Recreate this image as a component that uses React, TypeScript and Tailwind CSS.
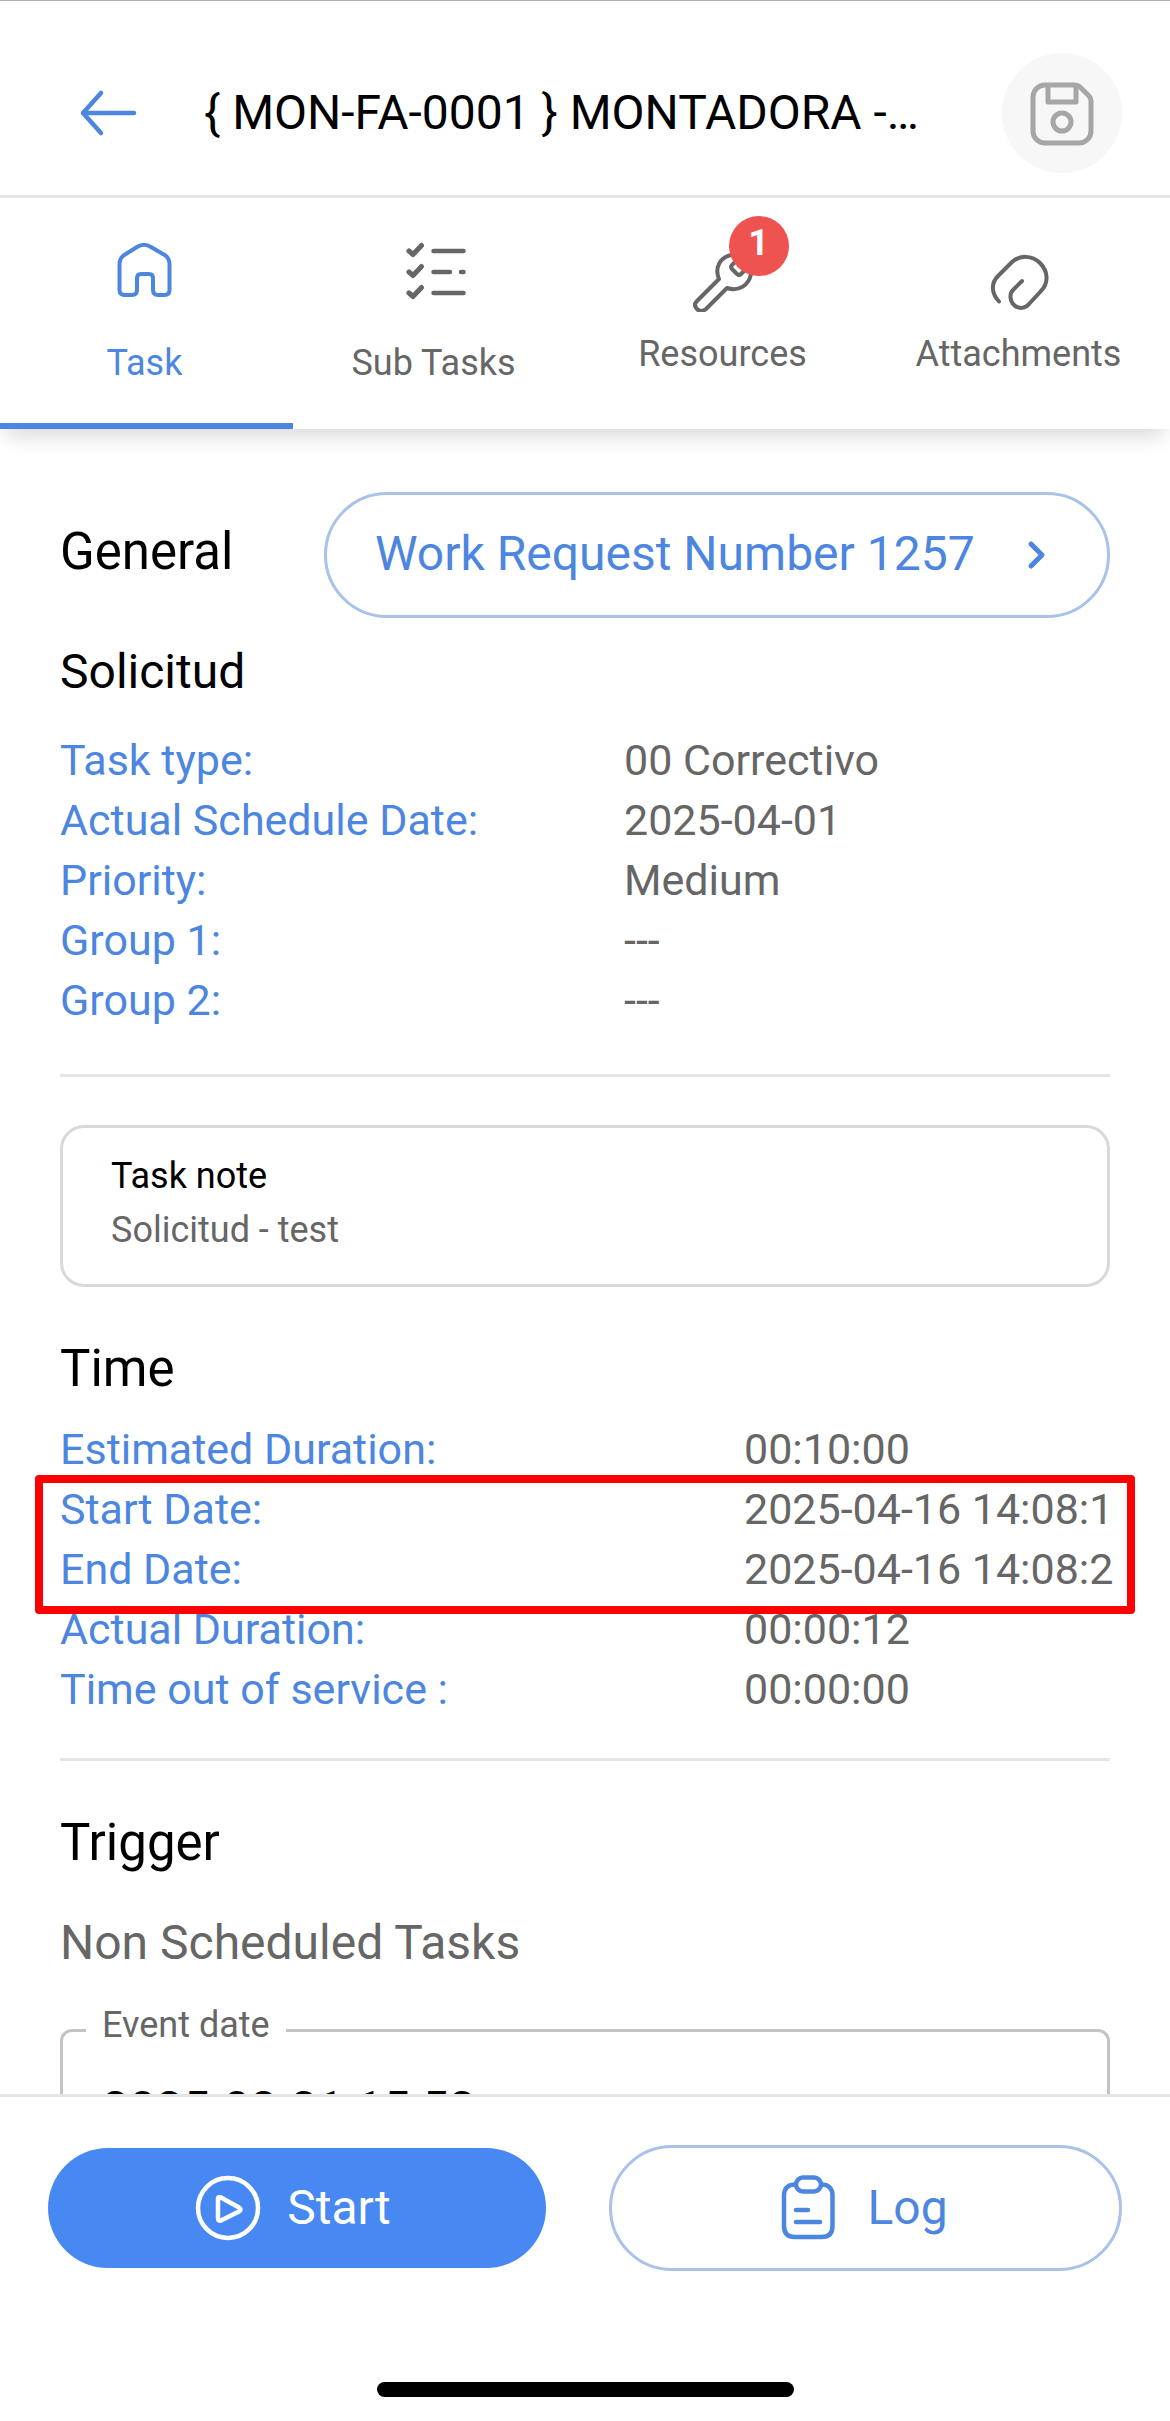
import { useState } from "react";
import type { ReactNode } from "react";

interface InfoRow {
  label: string;
  value: string;
}

interface TabItem {
  id: string;
  label: string;
  icon: ReactNode;
  badge?: number;
  compact?: boolean;
}

const generalRows: InfoRow[] = [
  { label: "Task type:", value: "00 Correctivo" },
  { label: "Actual Schedule Date:", value: "2025-04-01" },
  { label: "Priority:", value: "Medium" },
  { label: "Group 1:", value: "---" },
  { label: "Group 2:", value: "---" },
];

const dateRows: InfoRow[] = [
  { label: "Start Date:", value: "2025-04-16 14:08:1" },
  { label: "End Date:", value: "2025-04-16 14:08:2" },
];

const durationRows: InfoRow[] = [
  { label: "Actual Duration:", value: "00:00:12" },
  { label: "Time out of service :", value: "00:00:00" },
];

const strokeProps = {
  fill: "none",
  stroke: "currentColor",
  strokeWidth: 4,
  strokeLinecap: "round",
  strokeLinejoin: "round",
} as const;

function BackIcon() {
  return (
    <svg className="size-[60px]" viewBox="0 0 60 60" {...strokeProps} strokeWidth={4.5}>
      <path d="M56 30H5M23 10L5 30l18 20" />
    </svg>
  );
}

function SaveIcon() {
  return (
    <svg className="size-[66px]" viewBox="0 0 66 66" {...strokeProps} strokeWidth={5}>
      <path d="M16 5h30q3 0 5 2l9 9q2 2 2 5v30a12 12 0 0 1-12 12H16A12 12 0 0 1 4 51V17A12 12 0 0 1 16 5z" />
      <path d="M19 6v16h28V6" />
      <circle cx="33" cy="42" r="9" />
    </svg>
  );
}

function HomeIcon() {
  return (
    <svg className="size-[60px]" viewBox="0 0 60 60" {...strokeProps}>
      <path d="M4.5 24c0-4 1-6 4-8.500L22 7q7-4.500 14 0l14.500 8.500c3 2.500 4 4.500 4 8.500v26q0 5-5 5H43q-5 0-5-5V38q0-4-4-4h-8q-4 0-4 4v12q0 5-5 5H9.500q-5 0-5-5z" />
    </svg>
  );
}

function ChecklistIcon() {
  return (
    <svg className="size-[60px] overflow-visible" viewBox="0 0 60 60" {...strokeProps} strokeWidth={4.5}>
      <path d="M5 11l4 3.500 8.500-9M5 32l4 3.500 8.500-9M5 53l4 3.500 8.500-9" strokeWidth={5} />
      <path d="M29.500 11h30M29.500 32H46M57 32h2.500M29.500 53h30" />
    </svg>
  );
}

function WrenchIcon() {
  return (
    <svg className="size-[60px]" viewBox="0 0 60 60" {...strokeProps}>
      <path d="M38 3c-10 2-17 12-12 24L4 49q-4 4 0 8t9 0l21-21c12 4 22-3 24-14" />
      <path d="M46 6l-7 7q-2 2 0 4l5 5q2 2 4 0l7-7" />
    </svg>
  );
}

function ClipIcon() {
  return (
    <svg className="size-[60px] overflow-visible" viewBox="0 0 60 60" {...strokeProps}>
      <path d="M10 49.500C2 41 2 31 9 24L23 10c8-7 20-7 28 1s9 20 1 28L40 52c-4 5-11 5-15 1s-5-11-1-15l9-9" />
    </svg>
  );
}

function PlayIcon() {
  return (
    <svg className="size-[66px]" viewBox="0 0 66 66" {...strokeProps} strokeWidth={4.5}>
      <circle cx="33" cy="33" r="30" />
      <path d="M23 23.500v20q0 3 3 2l18-9q3-2 0-4l-18-10q-3-1-3 1z" />
    </svg>
  );
}

function ClipboardIcon() {
  return (
    <svg className="size-[66px]" viewBox="0 0 66 66" {...strokeProps} strokeWidth={4.5}>
      <path d="M20 9.500c-8 0-11 5-11 11V51q0 11 11 11h26.500q11 0 11-11V20.500c0-6-3-11-11-11" />
      <rect x="21" y="2.500" width="25" height="14" rx="7" />
      <path d="M21 35h12M21 47h24" />
    </svg>
  );
}

const tabs: TabItem[] = [
  { id: "task", label: "Task", icon: <HomeIcon /> },
  { id: "subtasks", label: "Sub Tasks", icon: <ChecklistIcon /> },
  { id: "resources", label: "Resources", icon: <WrenchIcon />, badge: 1, compact: true },
  { id: "attachments", label: "Attachments", icon: <ClipIcon />, compact: true },
];

function InfoList({ rows, wide = false }: { rows: InfoRow[]; wide?: boolean }) {
  return (
    <dl className="text-[43px] leading-[60px]">
      {rows.map((row) => (
        <div key={row.label} className="flex">
          <dt className={`shrink-0 text-[#4c86e0] ${wide ? "w-[684px]" : "w-[564px]"}`}>
            {row.label}
          </dt>
          <dd className="flex-1 whitespace-nowrap text-[#666]">{row.value}</dd>
        </div>
      ))}
    </dl>
  );
}

export default function App() {
  const [activeTab, setActiveTab] = useState("task");
  const [eventDate, setEventDate] = useState("2025-03-31 15:53");

  return (
    <div className="flex h-screen flex-col border-t border-[#b0b0b0] bg-white font-['Roboto',sans-serif] text-black">
      <header className="relative z-20 flex shrink-0 items-center border-b-3 border-[#e5e5e5] bg-white pt-[52px] pr-12 pb-[22px] pl-[78px]">
        <button aria-label="Back" className="text-[#4c86e0]">
          <BackIcon />
        </button>
        <h1 className="ml-[66px] text-[48px] leading-[60px] whitespace-nowrap">
          {"{ MON-FA-0001 } MONTADORA -…"}
        </h1>
        <button
          aria-label="Save"
          className="ml-auto flex size-[120px] shrink-0 items-center justify-center rounded-full bg-[#f7f7f7] text-[#a6a6a6]"
        >
          <SaveIcon />
        </button>
      </header>

      <nav className="relative z-10 flex h-[231px] shrink-0 bg-white shadow-[0_14px_18px_-6px_rgba(0,0,0,0.14)]">
        {tabs.map((tab) => (
          <button
            key={tab.id}
            onClick={() => setActiveTab(tab.id)}
            className={`relative flex flex-auto basis-[289px] flex-col items-center text-[36px] leading-[48px] last:basis-[303px] ${
              activeTab === tab.id ? "text-[#4c86e0]" : "text-[#666]"
            } ${tab.compact ? "gap-[18px] pt-[54px]" : "gap-[39px] pt-[42px]"}`}
          >
            <span className="relative">
              {tab.icon}
              {tab.badge && (
                <span className="absolute -top-9 left-9 flex size-[60px] justify-center rounded-full bg-[#ef5350] leading-[54px] font-bold text-white">
                  {tab.badge}
                </span>
              )}
            </span>
            {tab.label}
            {activeTab === tab.id && (
              <span className="absolute bottom-0 left-0 h-1.5 w-[293px] bg-[#4c86e0]" />
            )}
          </button>
        ))}
      </nav>

      <main className="min-h-0 flex-1 overflow-y-auto px-[60px] pt-[63px] [scrollbar-width:none]">
        <section>
          <div className="flex items-center justify-between">
            <h2 className="pb-1.5 text-[51px] leading-[60px]">General</h2>
            <button className="flex h-[126px] w-[786px] items-center justify-between rounded-full border-3 border-[#a9c2ea] px-12 pb-0.5 text-[48px] text-[#4c86e0]">
              Work Request Number 1257
              <svg className="size-12" viewBox="0 0 48 48" {...strokeProps} strokeWidth={5}>
                <path d="M20 14l11 11-11 11" />
              </svg>
            </button>
          </div>
          <h3 className="mt-6 text-[48px] leading-[60px]">Solicitud</h3>
          <div className="mt-7">
            <InfoList rows={generalRows} />
          </div>
        </section>

        <hr className="mt-11 border-t-3 border-[#e5e5e5]" />

        <section className="mt-12 h-[162px] rounded-3xl border-3 border-[#d9d9d9] px-12 pt-[21px] text-[36px] leading-[54px]">
          <h4>Task note</h4>
          <p className="text-[#666]">Solicitud - test</p>
        </section>

        <section className="mt-[52px]">
          <h2 className="text-[51px] leading-[60px]">Time</h2>
          <div className="mt-5">
            <InfoList wide rows={[{ label: "Estimated Duration:", value: "00:10:00" }]} />
            <div className="relative">
              <InfoList wide rows={dateRows} />
              <div className="absolute -inset-x-[25px] -top-1 z-10 -bottom-[15px] rounded-sm border-8 border-[#fe0000]" />
            </div>
            <InfoList wide rows={durationRows} />
          </div>
        </section>

        <hr className="mt-[39px] border-t-3 border-[#e5e5e5]" />

        <section className="mt-[52px]">
          <h2 className="text-[51px] leading-[60px]">Trigger</h2>
          <p className="mt-10 text-[48px] leading-[60px] text-[#666]">Non Scheduled Tasks</p>
          <fieldset className="mt-7 rounded-xl border-3 border-[#c4c4c4] px-[39px] pb-9">
            <legend className="-ml-4 px-4 pb-2.5 text-[36px] leading-[48px] text-[#666]">
              <label htmlFor="event-date">Event date</label>
            </legend>
            <input
              id="event-date"
              value={eventDate}
              onChange={(e) => setEventDate(e.target.value)}
              className="mt-5 w-full text-[48px] leading-[60px] outline-none"
            />
          </fieldset>
        </section>
      </main>

      <footer className="relative z-10 shrink-0 border-t-3 border-[#e5e5e5] bg-white px-12 pt-12 pb-6">
        <div className="grid grid-cols-[498fr_513fr] items-center gap-[63px] text-[48px]">
          <button className="flex h-[120px] items-center justify-center gap-[26px] rounded-full bg-[#4788f2] pr-2 text-white">
            <PlayIcon />
            Start
          </button>
          <button className="flex h-[126px] items-center justify-center gap-[26px] rounded-full border-3 border-[#a9c2ea] pr-2 text-[#4c86e0]">
            <ClipboardIcon />
            Log
          </button>
        </div>
        <div className="mx-auto mt-[111px] h-[15px] w-[417px] rounded-full bg-black" />
      </footer>
    </div>
  );
}
